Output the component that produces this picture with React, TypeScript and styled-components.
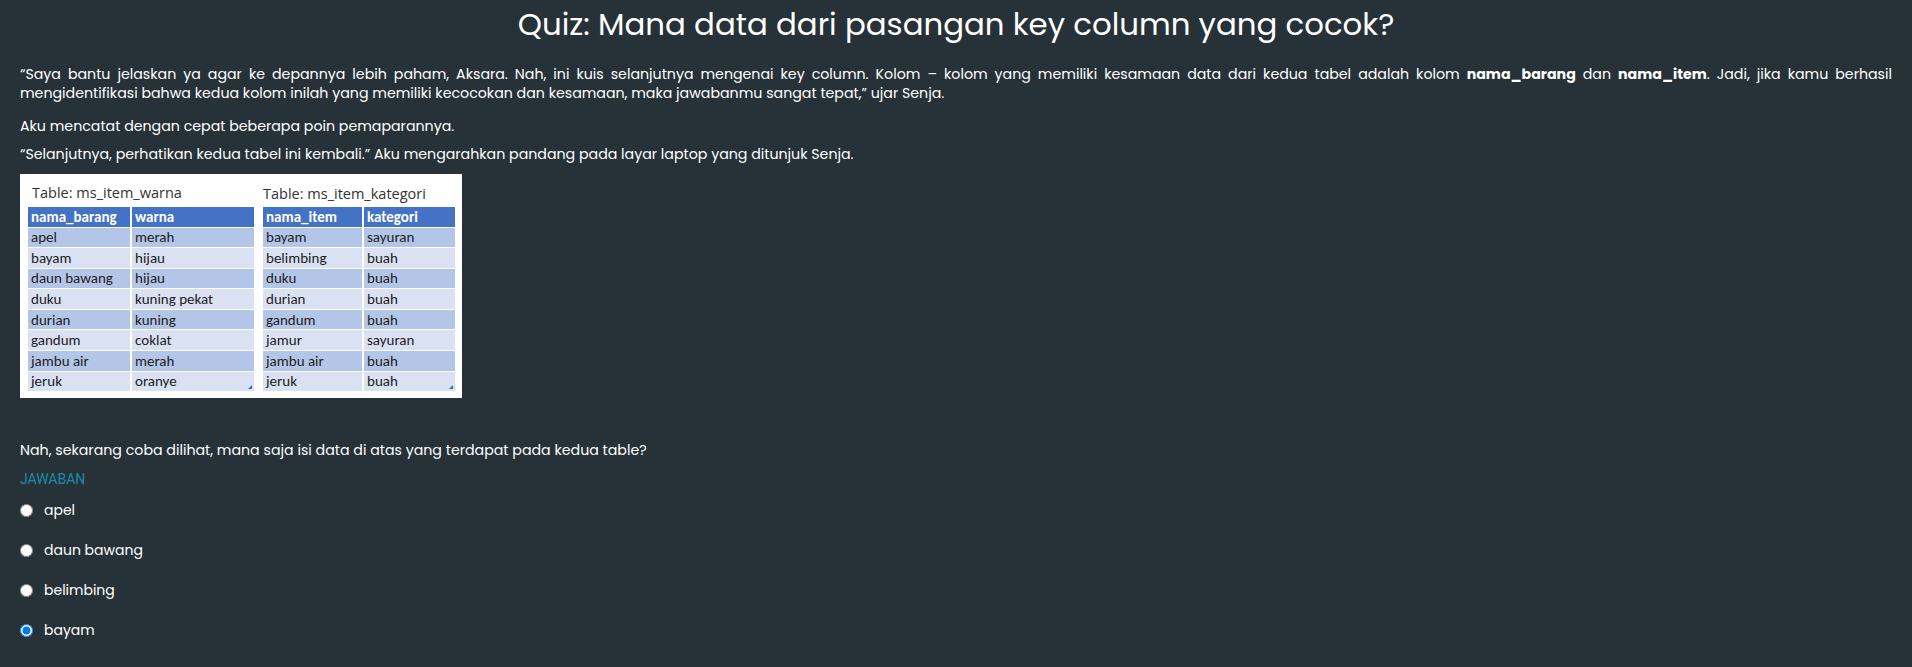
import React from "react";
import styled, { createGlobalStyle } from "styled-components";

const GlobalStyle = createGlobalStyle`
  html, body { margin: 0; padding: 0; background: #263238; }
  body { font-family: Poppins, "Open Sans", sans-serif; color: #fff; }
`;

const Page = styled.main`
  display: flex;
  flex-direction: column;
  padding: 5px 20px 20px;
`;

const Title = styled.h1`
  margin: 0;
  text-align: center;
  font-size: 30.8px;
  font-weight: 400;
  line-height: 40px;
`;

const Para = styled.p<{ $gap: number }>`
  margin: ${(p) => p.$gap}px 0 0;
  font-size: 14.2px;
  line-height: 19px;
  text-align: justify;
`;

const Figure = styled.figure`
  margin: 10px 0 0;
  width: 442px;
  height: 224px;
  box-sizing: border-box;
  background: #fff;
  display: flex;
  gap: 9px;
  padding: 0 7px 0 8px;
`;

const TableBlock = styled.div`
  display: flex;
  flex-direction: column;
`;

const TableCaption = styled.div<{ $top: number; $indent: number }>`
  font-family: "Open Sans", sans-serif;
  font-size: 14.5px;
  line-height: 16px;
  color: #333;
  padding: ${(p) => p.$top}px 0 0 ${(p) => p.$indent}px;
  height: 33px;
  box-sizing: border-box;
`;

const Sheet = styled.table`
  border-collapse: collapse;
  font-family: Carlito, Lato, sans-serif;
  font-size: 15px;
  color: #1d1d1d;
`;

const HeadCell = styled.th<{ $w: number }>`
  width: ${(p) => p.$w}px;
  height: 20px;
  padding: 0 0 0 3px;
  box-sizing: border-box;
  background: #4472c4;
  color: #fff;
  font-weight: 700;
  text-align: left;
  border-right: 2px solid #fff;
  border-bottom: 1px solid #fff;
  &:last-child { border-right: none; }
`;

const Cell = styled.td<{ $odd: boolean }>`
  position: relative;
  height: 20.6px;
  padding: 0 0 0 3px;
  box-sizing: border-box;
  background: ${(p) => (p.$odd ? "#b4c6e7" : "#d9e1f2")};
  border-right: 2px solid #fff;
  border-bottom: 1px solid #fff;
  &:last-child { border-right: none; }
`;

const Corner = styled.span`
  position: absolute;
  right: 2px;
  bottom: 2px;
  width: 0;
  height: 0;
  border-left: 4px solid transparent;
  border-bottom: 4px solid #3d68b8;
`;

const Question = styled.p`
  margin: 43px 0 0;
  font-size: 14.2px;
  line-height: 18px;
`;

const AnswerLabel = styled.div`
  margin-top: 11px;
  font-family: Roboto, sans-serif;
  font-size: 14px;
  line-height: 18px;
  color: #1f8aa8;
`;

const Options = styled.div`
  display: flex;
  flex-direction: column;
  margin-top: 2px;
`;

const Option = styled.label`
  display: flex;
  align-items: center;
  height: 40px;
  gap: 11px;
  font-size: 14px;
`;

const Radio = styled.input`
  margin: 0;
  width: 13px;
  height: 13px;
`;

type Table = {
  caption: string;
  cols: [string, string];
  widths: [number, number];
  rows: [string, string][];
  top: number;
  indent: number;
};

const tables: Table[] = [
  {
    caption: "Table: ms_item_warna",
    cols: ["nama_barang", "warna"],
    widths: [103, 123],
    top: 11,
    indent: 4,
    rows: [
      ["apel", "merah"],
      ["bayam", "hijau"],
      ["daun bawang", "hijau"],
      ["duku", "kuning pekat"],
      ["durian", "kuning"],
      ["gandum", "coklat"],
      ["jambu air", "merah"],
      ["jeruk", "oranye"],
    ],
  },
  {
    caption: "Table: ms_item_kategori",
    cols: ["nama_item", "kategori"],
    widths: [100, 92],
    top: 12,
    indent: 0,
    rows: [
      ["bayam", "sayuran"],
      ["belimbing", "buah"],
      ["duku", "buah"],
      ["durian", "buah"],
      ["gandum", "buah"],
      ["jamur", "sayuran"],
      ["jambu air", "buah"],
      ["jeruk", "buah"],
    ],
  },
];

const options = ["apel", "daun bawang", "belimbing", "bayam"];

export default function App() {
  return (
    <>
      <GlobalStyle />
      <Page>
        <Title>Quiz: Mana data dari pasangan key column yang cocok?</Title>
        <Para $gap={20}>
          “Saya bantu jelaskan ya agar ke depannya lebih paham, Aksara. Nah, ini kuis selanjutnya mengenai key column. Kolom – kolom yang memiliki kesamaan data dari kedua tabel adalah kolom <b>nama_barang</b> dan <b>nama_item</b>. Jadi, jika kamu berhasil mengidentifikasi bahwa kedua kolom inilah yang memiliki kecocokan dan kesamaan, maka jawabanmu sangat tepat,” ujar Senja.
        </Para>
        <Para $gap={14}>Aku mencatat dengan cepat beberapa poin pemaparannya.</Para>
        <Para $gap={9}>“Selanjutnya, perhatikan kedua tabel ini kembali.” Aku mengarahkan pandang pada layar laptop yang ditunjuk Senja.</Para>
        <Figure>
          {tables.map((t) => (
            <TableBlock key={t.caption}>
              <TableCaption $top={t.top} $indent={t.indent}>{t.caption}</TableCaption>
              <Sheet>
                <thead>
                  <tr>
                    <HeadCell $w={t.widths[0]}>{t.cols[0]}</HeadCell>
                    <HeadCell $w={t.widths[1]}>{t.cols[1]}</HeadCell>
                  </tr>
                </thead>
                <tbody>
                  {t.rows.map((r, i) => (
                    <tr key={i}>
                      <Cell $odd={i % 2 === 0}>{r[0]}</Cell>
                      <Cell $odd={i % 2 === 0}>
                        {r[1]}
                        {i === t.rows.length - 1 && <Corner />}
                      </Cell>
                    </tr>
                  ))}
                </tbody>
              </Sheet>
            </TableBlock>
          ))}
        </Figure>
        <Question>Nah, sekarang coba dilihat, mana saja isi data di atas yang terdapat pada kedua table?</Question>
        <AnswerLabel>JAWABAN</AnswerLabel>
        <Options>
          {options.map((o) => (
            <Option key={o}>
              <Radio type="radio" name="jawaban" defaultChecked={o === "bayam"} />
              {o}
            </Option>
          ))}
        </Options>
      </Page>
    </>
  );
}
